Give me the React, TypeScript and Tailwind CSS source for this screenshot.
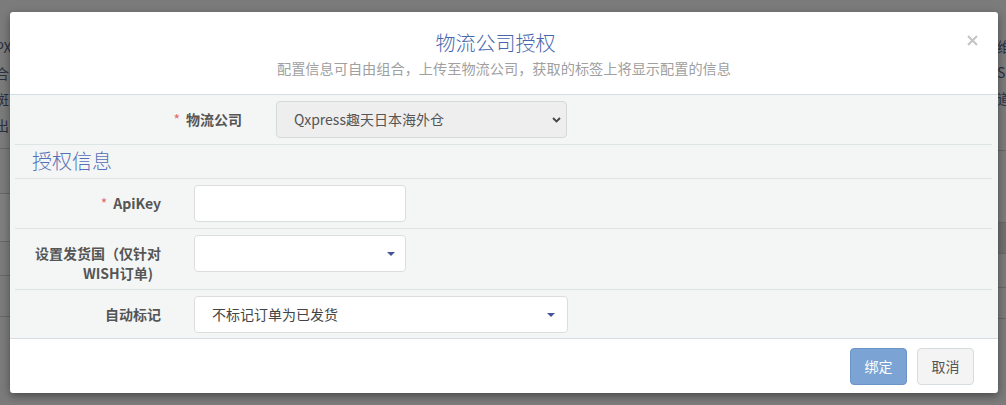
import React from 'react';

const font = { fontFamily: '"Noto Sans CJK SC", "Noto Sans", sans-serif' };

function Star() {
  return <span className="text-[#e26a6a] mr-[6px] font-normal">*</span>;
}

function Caret() {
  return (
    <svg width="10" height="6" viewBox="0 0 10 6" className="shrink-0">
      <path d="M1 1 L5 5 L9 1 Z" fill="#43559a" />
    </svg>
  );
}

function Row({ children, last }: { children: React.ReactNode; last?: boolean }) {
  return (
    <div className={`flex items-start py-[6px] ${last ? '' : 'border-b border-[#dde4e4]'}`}>
      {children}
    </div>
  );
}

export default function App() {
  return (
    <div className="relative w-[1006px] h-[405px] overflow-hidden bg-[#7b7b7b]" style={font}>
      {/* page behind the overlay */}
      <div className="flex justify-between text-[14px] text-[#2a3142] h-full">
        <div className="w-[12px] flex flex-col">
          <div className="pt-[34px] leading-[26px] -ml-[5px] whitespace-nowrap">
            <div>PX</div>
            <div>合</div>
            <div>斑</div>
            <div>出</div>
          </div>
          <div className="mt-[10px] h-[45px] border-t border-[#676767]" />
          <div className="h-[48px] border-t border-[#676767] bg-[#7f7f7f]" />
          <div className="h-[34px] border-t border-[#676767]" />
          <div className="h-[41px] border-t border-[#676767]" />
          <div className="border-t border-[#676767]" />
        </div>
        <div className="w-[10px] flex flex-col">
          <div className="pt-[33px] leading-[26px] ml-[1px] whitespace-nowrap">
            <div>维</div>
            <div>S</div>
            <div>道</div>
          </div>
          <div className="mt-[39px] h-[72px] border-t border-[#676767]" />
          <div className="h-[31px] border-t border-[#676767] bg-[#707070]" />
          <div className="h-[34px] border-t border-[#676767]" />
          <div className="h-[31px] border-t border-[#676767]" />
          <div className="border-t border-[#676767]" />
        </div>
      </div>

      {/* modal */}
      <div className="absolute left-[10px] top-[12px] w-[988px] h-[381px] bg-white rounded-[3px] shadow-[0_3px_9px_rgba(0,0,0,0.4)] flex flex-col">
        <div className="h-[83px] border-b border-[#d3dde2] flex flex-col items-center relative">
          <div className="pt-[17px] pr-[17px] text-[20px] leading-[28px] font-light text-[#4767ad]">物流公司授权</div>
          <div className="mt-[1px] text-[14.2px] leading-[20px] text-[#a0a0a0]">
            配置信息可自由组合，上传至物流公司，获取的标签上将显示配置的信息
          </div>
          <svg width="11" height="11" viewBox="0 0 11 11" className="absolute left-[957px] top-[23px]">
            <path d="M1 1 L10 10 M10 1 L1 10" stroke="#c4c4c4" strokeWidth="2" />
          </svg>
        </div>

        <div className="bg-[#f4f6f5] border-b border-[#d3dde2] pl-[5px] pr-[6px] h-[244px]">
          <Row>
            <label className="w-[227px] pt-[8px] text-right text-[14px] leading-[20px] font-bold text-[#555]">
              <Star />物流公司
            </label>
            <div className="ml-[34px] w-[291px] h-[37px] rounded-[4px] border border-[#d6d9d9] bg-[#eeeeee] flex items-center justify-between pl-[17px] pr-[5px] text-[14px] text-[#555]">
              <span>Qxpress趣天日本海外仓</span>
              <svg width="9" height="6" viewBox="0 0 9 6">
                <path d="M1 1 L4.5 4.5 L8 1" stroke="#444" strokeWidth="1.8" fill="none" />
              </svg>
            </div>
          </Row>
          <div className="border-b border-[#dde4e4] h-[34px] pl-[17px] text-[20px] leading-[32px] font-light text-[#5570b8]">
            授权信息
          </div>
          <Row>
            <label className="w-[146px] pt-[8px] text-right text-[14px] leading-[20px] font-bold text-[#555]">
              <Star />ApiKey
            </label>
            <div className="ml-[33px] w-[212px] h-[37px] rounded-[4px] border border-[#dcdede] bg-white" />
          </Row>
          <Row>
            <label className="w-[146px] pt-[8px] text-right text-[14px] leading-[20px] font-bold text-[#555]">
              <span className="block">设置发货国（仅针对</span>
              <span className="block mr-[8px]">WISH订单)</span>
            </label>
            <div className="ml-[33px] w-[212px] h-[37px] rounded-[4px] border border-[#dcdede] bg-white flex items-center justify-end pr-[9px]">
              <Caret />
            </div>
          </Row>
          <Row last>
            <label className="w-[146px] pt-[8px] text-right text-[14px] leading-[20px] font-bold text-[#555]">
              自动标记
            </label>
            <div className="ml-[33px] w-[374px] h-[37px] rounded-[4px] border border-[#dcdede] bg-white flex items-center justify-between pl-[17px] pr-[11px] text-[14px] text-[#444]">
              <span>不标记订单为已发货</span>
              <Caret />
            </div>
          </Row>
        </div>

        <div className="flex justify-end gap-[10px] pt-[9px] pr-[24px]">
          <button className="w-[57px] h-[37px] rounded-[4px] border border-[#6c94c8] bg-[#7ba3d4] text-white text-[14px]">
            绑定
          </button>
          <button className="w-[57px] h-[37px] rounded-[4px] border border-[#d5dde0] bg-[#f4f4f4] text-[#555] text-[14px]">
            取消
          </button>
        </div>
      </div>
    </div>
  );
}
